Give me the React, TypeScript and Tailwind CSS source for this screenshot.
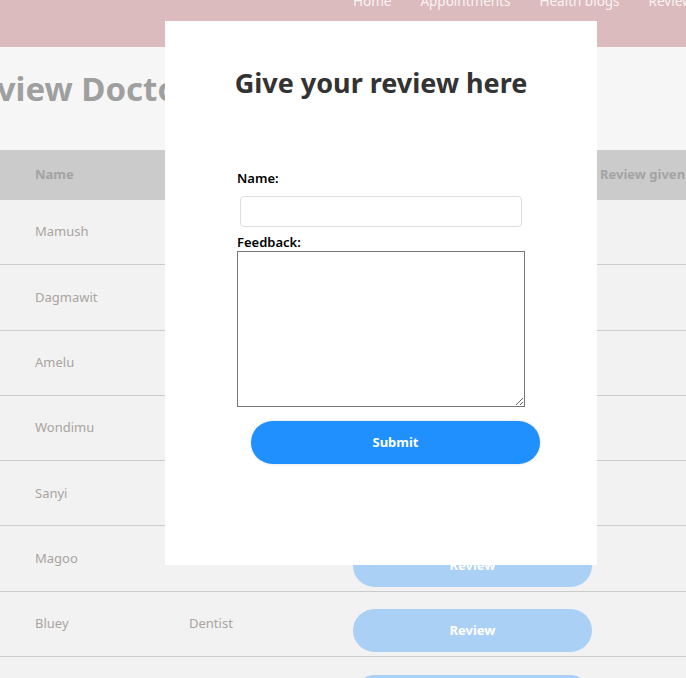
import React from "react";

const rows = [
  { name: "Mamush", spec: "" },
  { name: "Dagmawit", spec: "" },
  { name: "Amelu", spec: "" },
  { name: "Wondimu", spec: "" },
  { name: "Sanyi", spec: "" },
  { name: "Magoo", spec: "" },
  { name: "Bluey", spec: "Dentist" },
  { name: "", spec: "" },
];

export default function App() {
  const font = { fontFamily: '"Noto Sans", "Open Sans", sans-serif' };
  return (
    <div className="relative w-[686px] h-[678px] overflow-hidden bg-[#f6f6f6]" style={font}>
      {/* header */}
      <div className="h-[47px] bg-[#dbbbbe] flex items-start pl-[353px] gap-[29px] text-[13.5px] text-[#fbf3f3] leading-none whitespace-nowrap">
        <span className="-mt-[5px]">Home</span>
        <span className="-mt-[5px]">Appointments</span>
        <span className="-mt-[5px]">Health blogs</span>
        <span className="-mt-[5px]">Reviews</span>
      </div>
      {/* title */}
      <div className="h-[103px] pt-[20px] overflow-hidden">
        <h1 className="-ml-[44px] text-[33px] font-bold text-[#9f9f9f] whitespace-nowrap leading-[44px]">
          Review Doctors
        </h1>
      </div>
      {/* table */}
      <div className="w-[760px]">
        <div className="h-[50px] bg-[#cbcbcb] flex items-center text-[13px] font-bold text-[#a3a3a3]">
          <div className="w-[189px] pl-[35px]">Name</div>
          <div className="w-[164px]">Specialty</div>
          <div className="w-[247px]">Action</div>
          <div className="whitespace-nowrap">Review given</div>
        </div>
        {rows.map((r, i) => (
          <div
            key={i}
            className="h-[65.3px] bg-[#f2f2f2] border-b border-[#cccccc] flex items-center text-[13px] text-[#aaa49f]"
          >
            <div className="w-[189px] pl-[35px]">{r.name}</div>
            <div className="w-[164px]">{r.spec}</div>
            <div className="w-[247px]">
              <button className="mt-[14px] w-[239px] h-[43px] rounded-full bg-[#abd0f5] text-white font-bold text-[13px]">
                Review
              </button>
            </div>
            <div></div>
          </div>
        ))}
      </div>

      {/* modal */}
      <div className="absolute left-[165px] top-[21px] w-[432px] h-[544px] bg-white">
        <h2 className="text-center text-[27px] font-bold text-[#333333] mt-[43px] leading-[38px]">
          Give your review here
        </h2>
        <form className="ml-[72px] mt-[67px] flex flex-col items-start" onSubmit={(e) => e.preventDefault()}>
          <label className="text-[13px] font-semibold text-black leading-[18px]">Name:</label>
          <input
            type="text"
            className="ml-[3px] mt-[9px] w-[282px] h-[31px] border border-[#dddddd] rounded-[4px] bg-white"
          />
          <label className="mt-[6px] text-[13px] font-semibold text-black leading-[18px]">Feedback:</label>
          <textarea className="w-[288px] h-[156px] border border-[#767676] bg-white resize" />
          <button
            type="submit"
            className="ml-[14px] mt-[14px] w-[289px] h-[43px] rounded-full bg-[#1f90fd] text-white font-bold text-[13px] shadow-[0_0_3px_rgba(0,0,0,0.15)]"
          >
            Submit
          </button>
        </form>
      </div>
    </div>
  );
}
